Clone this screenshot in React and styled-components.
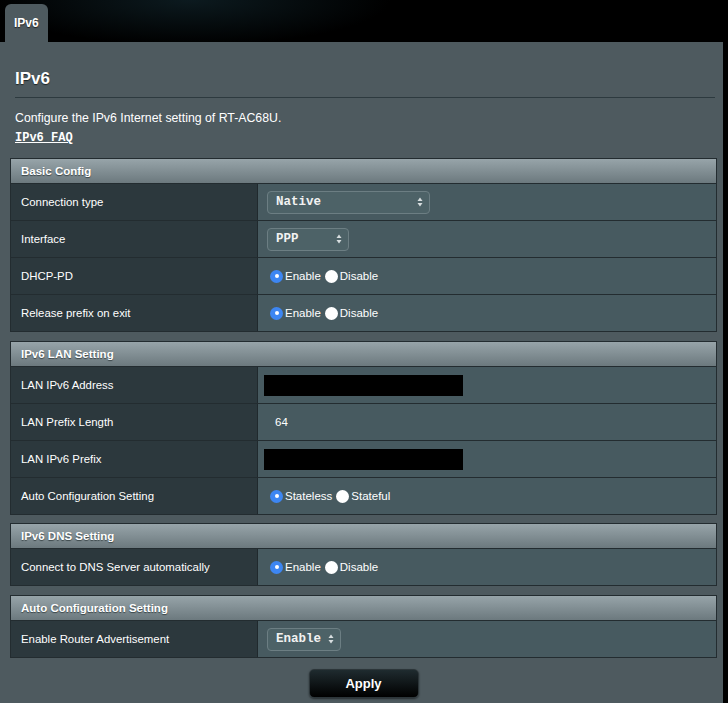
import React from "react";
import styled, { createGlobalStyle } from "styled-components";

const GlobalStyle = createGlobalStyle`
    html, body {
        margin: 0;
        padding: 0;
        background: radial-gradient(ellipse 200px 45px at 190px 0px, #0c1a1f 0%, #000 100%), #000;
        background-color: #000;
        font-family: "Liberation Sans", Arial, sans-serif;
        color: #fff;
    }
`;

const Page = styled.div`
    width: 728px;
    height: 703px;
    overflow: hidden;
    padding-top: 4px;
    box-sizing: border-box;
`;

const Tab = styled.div`
    width: 43px;
    height: 38px;
    margin-left: 5px;
    background: #4e5a5f;
    border-radius: 6px 6px 0 0;
    font-size: 12px;
    font-weight: bold;
    box-sizing: border-box;
    padding: 12px 0 0 9px;
    text-shadow: 0 1px 1px #222;
`;

const Panel = styled.div`
    width: 723px;
    min-height: 700px;
    background: #4e5a5f;
    box-sizing: border-box;
    padding: 0 6px 10px 10px;
`;

const Title = styled.h2`
    margin: 0;
    padding: 27px 0 0 5px;
    font-size: 17px;
    line-height: 20px;
    font-weight: bold;
    text-shadow: 0 1px 1px #1d2528;
`;

const Divider = styled.div`
    height: 1px;
    margin: 8px 2px 12px 5px;
    background: #2d3a3f;
`;

const Desc = styled.p`
    margin: 0 0 4px 5px;
    font-size: 12.3px;
    line-height: 16px;
`;

const FaqLink = styled.a`
    display: block;
    margin: 0 0 12px 5px;
    font-family: "Liberation Mono", monospace;
    font-weight: bold;
    font-size: 12px;
    line-height: 16px;
    color: #fff;
    text-decoration: underline;
`;

const Section = styled.div`
    border: 1px solid #232c30;
    margin-bottom: ${(p) => p.$gap || 8}px;
`;

const SectionHead = styled.div`
    height: 24px;
    line-height: 25px;
    padding-left: 10px;
    font-size: 11.5px;
    font-weight: bold;
    background: linear-gradient(#97a4a9, #6c797e);
    text-shadow: 0 1px 1px #3a4548;
`;

const Row = styled.div`
    display: grid;
    grid-template-columns: 247px 1fr;
    height: 37px;
    border-top: 1px solid #232c30;
    box-sizing: border-box;
`;

const Label = styled.div`
    background: #2c383d;
    border-right: 1px solid #20292d;
    display: flex;
    align-items: center;
    padding-left: 10px;
    font-size: 11.4px;
`;

const Value = styled.div`
    background: #475a60;
    display: flex;
    align-items: center;
    padding-left: ${(p) => p.$pad ?? 9}px;
    font-size: 11.5px;
`;

const SelectBox = styled.div`
    width: ${(p) => p.$w}px;
    height: 23px;
    box-sizing: border-box;
    border: 1px solid #6c7e83;
    border-radius: 4px;
    background: #4d6267;
    display: flex;
    align-items: center;
    justify-content: space-between;
    padding: 0 6px 0 8px;
    font-family: "Liberation Mono", monospace;
    font-weight: bold;
    font-size: 12.5px;
    color: #f2f2f2;
`;

const Radios = styled.div`
    display: flex;
    align-items: center;
    padding-left: 3px;
`;

const RadioDot = styled.span`
    width: 13px;
    height: 13px;
    border-radius: 50%;
    box-sizing: border-box;
    background: ${(p) => (p.$on ? "#3d86f2" : "#fff")};
    display: flex;
    align-items: center;
    justify-content: center;
    margin-right: 2px;
    &::after {
        content: "";
        width: 4px;
        height: 4px;
        border-radius: 50%;
        background: ${(p) => (p.$on ? "#fff" : "transparent")};
    }
`;

const RadioText = styled.span`
    margin-right: 4px;
`;

const Masked = styled.div`
    width: 199px;
    height: 21px;
    background: #000;
`;

const PlainValue = styled.span`
    margin-left: 8px;
`;

const Actions = styled.div`
    display: flex;
    justify-content: center;
    padding-top: 2px;
`;

const ApplyButton = styled.button`
    width: 110px;
    height: 29px;
    border: 1px solid #2c3539;
    border-radius: 5px;
    background: linear-gradient(#1f2b2f, #000);
    color: #fff;
    font-family: "Liberation Sans", Arial, sans-serif;
    font-weight: bold;
    font-size: 13px;
    box-shadow: 0 1px 2px rgba(0, 0, 0, 0.5);
`;

const Arrows = () => (
    <svg width="6" height="10" viewBox="0 0 6 10">
        <path d="M3 0.5 L5.5 4 H0.5 Z" fill="#d8dee0" />
        <path d="M3 9.5 L5.5 6 H0.5 Z" fill="#d8dee0" />
    </svg>
);

const Select = ({ w, children }) => (
    <SelectBox $w={w}>
        <span>{children}</span>
        <Arrows />
    </SelectBox>
);

const RadioPair = ({ a, b }) => (
    <Radios>
        <RadioDot $on />
        <RadioText>{a}</RadioText>
        <RadioDot />
        <RadioText>{b}</RadioText>
    </Radios>
);

const App = () => {
    return (
        <Page>
            <GlobalStyle />
            <Tab>IPv6</Tab>
            <Panel>
                <Title>IPv6</Title>
                <Divider />
                <Desc>Configure the IPv6 Internet setting of RT-AC68U.</Desc>
                <FaqLink>IPv6 FAQ</FaqLink>

                <Section $gap={9}>
                    <SectionHead>Basic Config</SectionHead>
                    <Row>
                        <Label>Connection type</Label>
                        <Value><Select w={163}>Native</Select></Value>
                    </Row>
                    <Row>
                        <Label>Interface</Label>
                        <Value><Select w={82}>PPP</Select></Value>
                    </Row>
                    <Row>
                        <Label>DHCP-PD</Label>
                        <Value><RadioPair a="Enable" b="Disable" /></Value>
                    </Row>
                    <Row>
                        <Label>Release prefix on exit</Label>
                        <Value><RadioPair a="Enable" b="Disable" /></Value>
                    </Row>
                </Section>

                <Section>
                    <SectionHead>IPv6 LAN Setting</SectionHead>
                    <Row>
                        <Label>LAN IPv6 Address</Label>
                        <Value $pad={6}><Masked /></Value>
                    </Row>
                    <Row>
                        <Label>LAN Prefix Length</Label>
                        <Value><PlainValue>64</PlainValue></Value>
                    </Row>
                    <Row>
                        <Label>LAN IPv6 Prefix</Label>
                        <Value $pad={6}><Masked /></Value>
                    </Row>
                    <Row>
                        <Label>Auto Configuration Setting</Label>
                        <Value><RadioPair a="Stateless" b="Stateful" /></Value>
                    </Row>
                </Section>

                <Section $gap={9}>
                    <SectionHead>IPv6 DNS Setting</SectionHead>
                    <Row>
                        <Label>Connect to DNS Server automatically</Label>
                        <Value><RadioPair a="Enable" b="Disable" /></Value>
                    </Row>
                </Section>

                <Section $gap={9}>
                    <SectionHead>Auto Configuration Setting</SectionHead>
                    <Row>
                        <Label>Enable Router Advertisement</Label>
                        <Value><Select w={74}>Enable</Select></Value>
                    </Row>
                </Section>

                <Actions>
                    <ApplyButton>Apply</ApplyButton>
                </Actions>
            </Panel>
        </Page>
    );
};

export default App;
